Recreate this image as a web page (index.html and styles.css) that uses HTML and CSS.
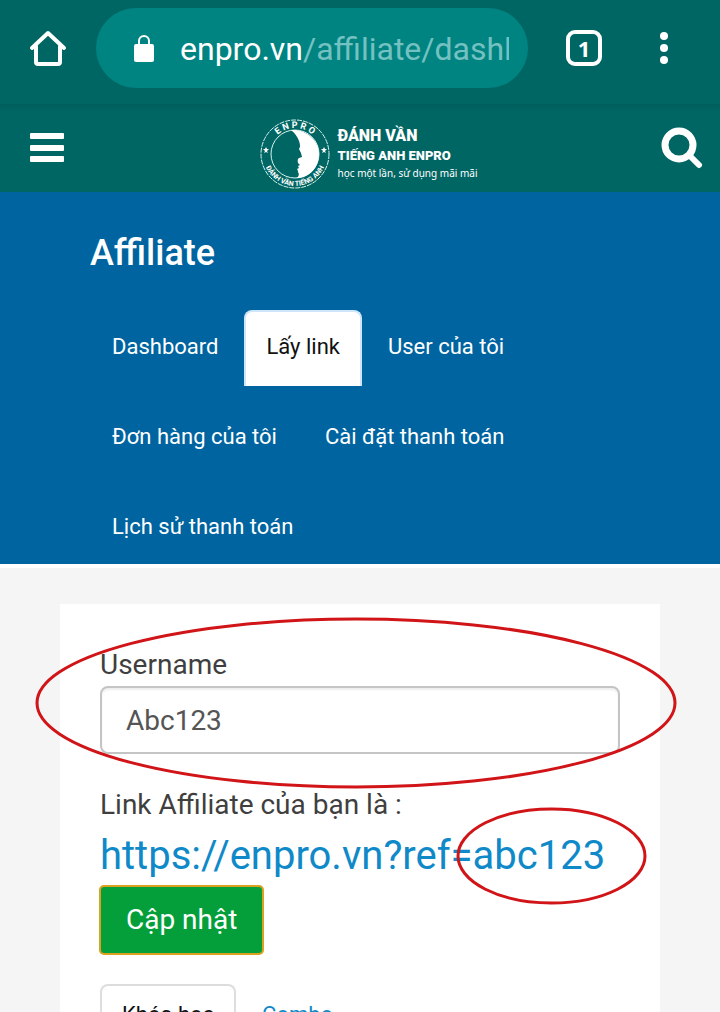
FILE: index.html
```html
<!DOCTYPE html>
<html lang="vi">
<head>
<meta charset="utf-8">
<meta name="viewport" content="width=device-width, initial-scale=1">
<title>Affiliate - Lấy link</title>
<link rel="stylesheet" href="styles.css">
</head>
<body>
<div class="screen">
  <div class="browser-bar">
    <button class="icon-button" type="button" aria-label="Home">
      <svg width="40" height="40" viewBox="0 0 40 40" fill="none" stroke="currentColor" stroke-width="4" stroke-linejoin="round" stroke-linecap="round"><path d="M4 20 20 5 36 20M8 18V34Q8 36 10 36H30Q32 36 32 34V18"/></svg>
    </button>
    <a class="address" href="#">
      <svg class="lock" width="20" height="28" viewBox="0 0 20 28"><rect y="9" width="20" height="18" rx="2" fill="currentColor"/><path d="M5 10V6a5 5 0 0 1 10 0v4" fill="none" stroke="currentColor" stroke-width="2"/></svg>
      <span class="url">enpro.vn<span class="url-path">/affiliate/dashboard</span></span>
    </a>
    <button class="icon-button tabs-count" type="button" aria-label="Tabs">1</button>
    <button class="icon-button" type="button" aria-label="Menu">
      <svg width="8" height="32" viewBox="0 0 8 32" fill="currentColor"><circle cx="4" cy="4" r="4"/><circle cx="4" cy="16" r="4"/><circle cx="4" cy="28" r="4"/></svg>
    </button>
  </div>

  <header class="site-header">
    <button class="icon-button menu-button" type="button" aria-label="Menu">
      <svg width="34" height="30" viewBox="0 0 34 30" fill="currentColor"><rect width="34" height="6" rx="1"/><rect y="12" width="34" height="6" rx="1"/><rect y="23" width="34" height="6" rx="1"/></svg>
    </button>
    <a class="brand" href="#">
      <svg width="70" height="70" viewBox="0 0 70 70">
        <defs>
          <path id="arc-top" d="M9 35a26 26 0 0 1 52 0"/>
          <path id="arc-bottom" d="M4 27a32 32 0 1 0 62 0"/>
        </defs>
        <g fill="none" stroke="#d9f3ef"><circle cx="35" cy="35" r="34" stroke-dasharray="5 1"/><circle cx="35" cy="35" r="24"/></g>
        <path fill="#fff" d="M31 11C46 10 59 21 59 35S49 59 37 59q3-3 1-6 0-2-1-3l2-1-1-2 2-1-2-2q-1-4 1-5l3-1q-1-5-3-8 2-3 0-8Q37 16 31 11Z"/>
        <g class="seal-text">
          <text class="seal-top"><textPath href="#arc-top" startOffset="50%" text-anchor="middle">E N P R O</textPath></text>
          <text><textPath href="#arc-bottom" startOffset="50%" text-anchor="middle">ĐÁNH  VẦN  TIẾNG  ANH</textPath></text>
        </g>
        <g fill="#fff"><path id="star" d="M6 28 7 30 9 30 7 32 8 34 6 33 4 34 5 32 3 30 5 30Z"/><use href="#star" x="58"/></g>
      </svg>
      <span class="brand-text">
        <span class="brand-title">ĐÁNH VẦN</span>
        <span class="brand-name">TIẾNG ANH ENPRO</span>
        <span class="brand-slogan">học một lần, sử dụng mãi mãi</span>
      </span>
    </a>
    <button class="icon-button search-button" type="button" aria-label="Search">
      <svg width="42" height="42" viewBox="0 0 42 42" fill="none" stroke="currentColor" stroke-linecap="round"><circle cx="18" cy="18" r="14" stroke-width="7"/><path d="M28 28 38 38" stroke-width="6"/></svg>
    </button>
  </header>

  <section class="banner">
    <h1 class="banner-title">Affiliate</h1>
    <nav class="nav">
      <a class="tab" href="#">Dashboard</a>
      <a class="tab tab-active" href="#">Lấy link</a>
      <a class="tab" href="#">User của tôi</a>
      <a class="tab" href="#">Đơn hàng của tôi</a>
      <a class="tab" href="#">Cài đặt thanh toán</a>
      <a class="tab" href="#">Lịch sử thanh toán</a>
    </nav>
  </section>

  <main class="content">
    <form class="card">
      <div class="field">
        <label class="label" for="username">Username</label>
        <input class="input" id="username" type="text" value="Abc123">
        <svg class="mark mark-field" aria-hidden="true"><ellipse cx="50%" cy="50%"/></svg>
      </div>
      <p class="label link-label">Link Affiliate của bạn là :</p>
      <p class="link-row"><a class="link" href="#">https://enpro.vn?ref=<span class="code">abc123<svg class="mark mark-code" aria-hidden="true"><ellipse cx="50%" cy="50%"/></svg></span></a></p>
      <button class="submit" type="button">Cập nhật</button>
      <nav class="nav card-nav">
        <a class="tab tab-active" href="#">Khóa học</a>
        <a class="tab" href="#">Combo</a>
      </nav>
    </form>
  </main>
</div>
</body>
</html>
```
FILE: styles.css
```css
* { box-sizing: border-box; }

body {
  margin: 0;
  font-family: Roboto, "Noto Sans", sans-serif;
  color: #3f3f3f;
}

.screen {
  height: 100vh;
  overflow: hidden;
}

.icon-button {
  display: flex;
  align-items: center;
  justify-content: center;
  flex: none;
  padding: 0;
  border: 0;
  background: none;
  color: #fff;
}

.browser-bar {
  display: flex;
  align-items: center;
  padding: 8px 52px 16px 28px;
  background: #006663;
}

.address {
  display: flex;
  align-items: center;
  flex: 1;
  min-width: 0;
  height: 80px;
  margin: 0 38px 0 28px;
  padding: 2px 19px 0 38px;
  border-radius: 40px;
  background: #008481;
  color: #fff;
  text-decoration: none;
}

.lock {
  flex: none;
  margin-right: 26px;
}

.url {
  overflow: hidden;
  white-space: nowrap;
  font-size: 32px;
  line-height: 40px;
}

.url-path { color: #75c1c1; }

.tabs-count {
  width: 36px;
  height: 36px;
  margin-right: 58px;
  border: 4px solid #fff;
  border-radius: 9px;
  font: 700 22px/28px "Noto Sans", sans-serif;
}

.site-header {
  display: flex;
  align-items: center;
  justify-content: space-between;
  height: 88px;
  padding: 0 17px 0 30px;
  background: linear-gradient(#005f5d, #006663 8px);
}

.menu-button { padding-right: 12px; }

.brand {
  display: flex;
  align-items: center;
  gap: 8px;
  padding-top: 12px;
  color: #fff;
  text-decoration: none;
}

.brand-text {
  display: flex;
  flex-direction: column;
  padding-bottom: 2px;
  white-space: nowrap;
}

.brand-title { font-size: 16px; font-weight: 900; line-height: 20px; }
.brand-name { font-size: 13px; font-weight: 900; line-height: 20px; }
.brand-slogan { font: 10px/14px "Noto Sans", sans-serif; }

.seal-text {
  fill: #fff;
  font-size: 7px;
  font-weight: 700;
  white-space: pre;
}

.seal-top { font-size: 9px; }

.banner {
  padding: 40px 70px 0 90px;
  background: #0064a0;
}

.banner-title {
  margin: 0 0 36px;
  color: #fff;
  font-size: 36px;
  font-weight: 500;
  line-height: 42px;
}

.nav {
  display: flex;
  flex-wrap: wrap;
  column-gap: 4px;
  row-gap: 14px;
}

.tab {
  height: 76px;
  padding: 15px 20px 0;
  border: 2px solid transparent;
  border-bottom: 0;
  border-radius: 8px 8px 0 0;
  color: #fff;
  font-size: 22px;
  line-height: 40px;
  text-decoration: none;
}

.tab-active {
  border-color: #ddd;
  background: #fff;
  color: #111;
}

.banner .nav { margin-bottom: -2px; }
.banner .tab-active { border-color: #cfe5fa; }

.content {
  position: relative;
  padding: 36px 60px;
  border-top: 4px solid #fff;
  background: #f5f5f5;
}

.card {
  padding: 40px;
  background: #fff;
}

.field { position: relative; }

.label {
  display: block;
  margin: 0;
  font-size: 28px;
  line-height: 42px;
}

.input {
  display: block;
  width: 100%;
  height: 68px;
  padding: 0 24px;
  border: 2px solid #c4c4c4;
  border-radius: 8px;
  background: #fff;
  box-shadow: inset 0 2px 2px #eee;
  clip-path: ellipse(319px 84px at 256px 17px);
  color: #555;
  font: 28px/40px Roboto, sans-serif;
}

.link-label { margin-top: 30px; }

.link-row {
  margin: 0 -40px 0 0;
  font-size: 40px;
  line-height: 60px;
}

.link {
  color: #1089c8;
  text-decoration: none;
}

.code {
  position: relative;
  display: inline-block;
}

/* Hand-drawn style highlights lying over the form */
.mark {
  position: absolute;
  overflow: visible;
  fill: none;
  stroke: #d01417;
  stroke-width: 3px;
  pointer-events: none;
}

.mark ellipse { rx: 50%; ry: 50%; }

.mark-field {
  left: -63px;
  top: -25px;
  width: calc(100% + 118px);
  height: 168px;
}

.mark-code {
  left: -15px;
  top: -17px;
  width: 187px;
  height: 94px;
}

.submit {
  display: block;
  height: 68px;
  padding: 0 25px;
  border: 1px solid #6f8a10;
  border-radius: 4px;
  outline: 2px solid #d9a321;
  outline-offset: -1px;
  background: #049f3a;
  color: #fff;
  font: 28px/40px Roboto, sans-serif;
}

.card-nav { margin-top: 30px; }

.card-nav .tab {
  padding-top: 9px;
  color: #1089c8;
}

.card-nav .tab-active { color: #111; }
```
